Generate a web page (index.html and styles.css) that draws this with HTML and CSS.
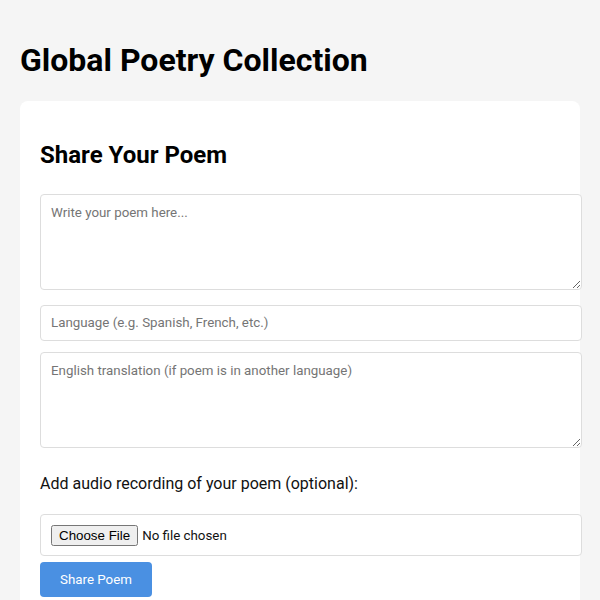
FILE: index.html
```html
<!DOCTYPE html>
<html lang="en">
<head>
<meta charset="utf-8">
<title>Global Poetry Collection</title>
<link rel="stylesheet" href="styles.css">
</head>
<body>
  <h1 class="page-title">Global Poetry Collection</h1>
  <section class="card">
    <h2 class="card-title">Share Your Poem</h2>
    <form class="poem-form">
      <textarea class="field field-area field-poem" placeholder="Write your poem here..."></textarea>
      <input class="field field-input" type="text" placeholder="Language (e.g. Spanish, French, etc.)">
      <textarea class="field field-area field-translation" placeholder="English translation (if poem is in another language)"></textarea>
      <label class="audio-label" for="audio">Add audio recording of your poem (optional):</label>
      <input class="field field-file" id="audio" type="file" accept="audio/*">
      <button class="submit-btn" type="button">Share Poem</button>
    </form>
  </section>
</body>
</html>
```
FILE: styles.css
```css
html, body {
  margin: 0;
}

body {
  padding: 20px;
  background: #f5f5f5;
  font-family: Roboto, "Liberation Sans", sans-serif;
  color: #111;
}

.page-title {
  font-size: 32px;
  font-weight: 700;
  margin: 21.44px 0;
  color: #000;
}

.card {
  background: #fff;
  border-radius: 8px;
  padding: 20px;
}

.card-title {
  font-size: 24px;
  font-weight: 700;
  margin: 19.92px 0 25px;
  color: #000;
}

.poem-form {
  display: flex;
  flex-direction: column;
  align-items: flex-start;
}

.field {
  display: block;
  width: 100%;
  box-sizing: content-box;
  padding: 10px;
  border: 1px solid #ddd;
  border-radius: 4px;
  font-family: Roboto, "Liberation Sans", sans-serif;
  font-size: 13.333px;
  background: #fff;
  margin: 0;
}

.field::placeholder {
  color: #757575;
}

.field-area {
  height: 74px;
  resize: vertical;
}

.field-poem {
  margin-bottom: 15px;
}

.field-input {
  height: 14px;
  margin-bottom: 11px;
}

.field-translation {
  margin-bottom: 26px;
}

.audio-label {
  display: block;
  font-size: 16px;
  color: #111;
  margin-bottom: 21px;
}

.field-file {
  height: 20px;
  margin-bottom: 6px;
}

.submit-btn {
  background: #4a90e2;
  color: #fff;
  border: none;
  border-radius: 4px;
  padding: 10px 20px;
  font-family: Roboto, "Liberation Sans", sans-serif;
  font-size: 13.333px;
  cursor: pointer;
}
```
